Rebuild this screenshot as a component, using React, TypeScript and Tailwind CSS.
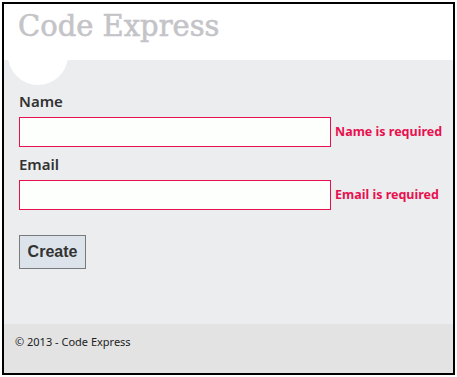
import React from "react";

const sans = { fontFamily: '"Noto Sans", "Open Sans", sans-serif' };

const Field = ({ label, error }: { label: string; error: string }) => {
  return (
    <div className="flex flex-col">
      <label className="h-[20px] text-[15px] leading-[20px] font-semibold text-[#333]">{label}</label>
      <div className="mt-[6px] flex items-center">
        <input className="w-[312px] h-[30px] border border-[#e8104e] bg-[#fdfffd] outline-none" />
        <span className="ml-[4px] text-[12.5px] font-bold text-[#e8104e]">{error}</span>
      </div>
    </div>
  );
};

const App = () => {
  return (
    <div className="w-[457px] h-[377px] bg-white p-[2px]" style={sans}>
      <div className="h-full border-2 border-black flex flex-col overflow-hidden">
        <div className="relative h-[56px] bg-white pl-[14px] pt-[4px]">
          <div className="absolute left-[4px] top-[21px] w-[60px] h-[60px] rounded-full bg-white z-10" />
          <h1
            className="relative z-20 text-[29px] leading-[36px] font-normal text-[#c4c4c8] [-webkit-text-stroke:0.6px_#c4c4c8]"
            style={{ fontFamily: '"DejaVu Serif", serif' }}
          >
            Code Express
          </h1>
        </div>
        <div className="flex-1 bg-[#ecedef] pl-[15px] pt-[31px]">
          <div className="flex flex-col gap-[7px]">
            <Field label="Name" error="Name is required" />
            <Field label="Email" error="Email is required" />
          </div>
          <button
            className="mt-[25px] w-[67px] h-[34px] border border-[#7a7a7a] bg-[#dde3ea] text-[16px] font-bold text-[#333]"
            style={{ fontFamily: '"Liberation Sans", Arial, sans-serif' }}
          >
            Create
          </button>
        </div>
        <div className="h-[49px] bg-[#e3e3e3] pl-[11px] pt-[10px] text-[11px] leading-[16px] text-[#222]">
          © 2013 - Code Express
        </div>
      </div>
    </div>
  );
};

export default App;
